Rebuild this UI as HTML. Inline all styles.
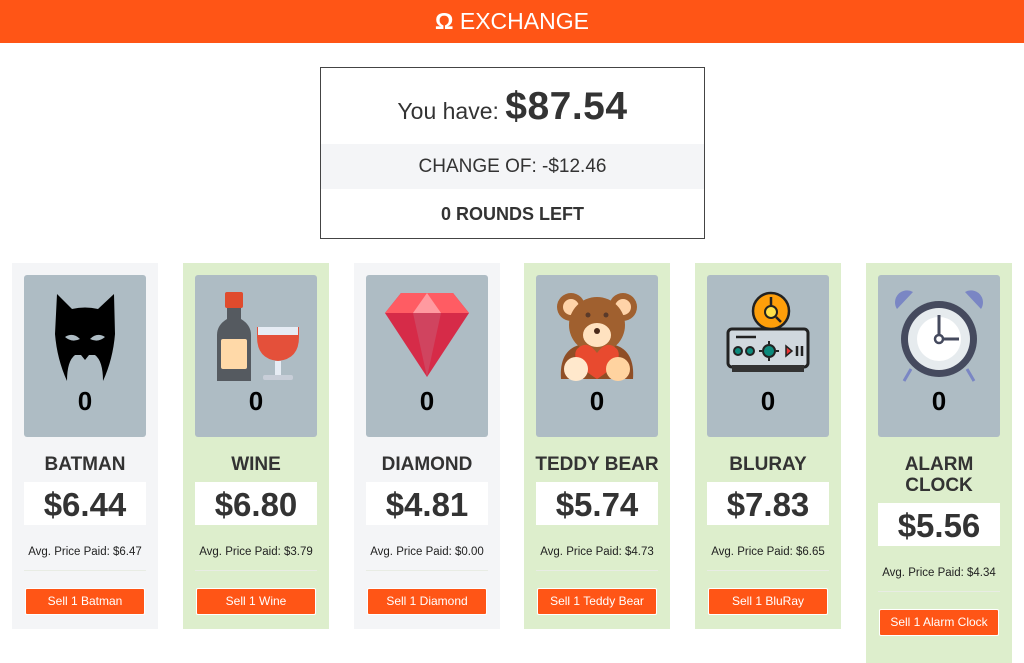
<!DOCTYPE html>
<html><head><meta charset="utf-8"><style>
*{box-sizing:border-box;margin:0;padding:0}
body{width:1024px;height:640px;overflow:hidden;background:#fff;font-family:"Liberation Sans",sans-serif;color:#333;position:relative}
.hdr{position:absolute;left:0;top:0;width:1024px;height:43px;background:#ff5516;color:#fff;font-size:23px;text-align:center;line-height:43px}
.box{position:absolute;left:320px;top:67px;width:385px;height:172px;border:1px solid #444;background:#fff;text-align:center}
.you{height:76px;line-height:78px;font-size:23px}
.you b{font-size:39px;letter-spacing:0.5px}
.chg{height:45px;line-height:46px;background:#f4f5f7;font-size:19px}
.rnd{height:49px;line-height:51px;font-size:18px;font-weight:bold}
.card{position:absolute;top:263px;width:146px;height:366px;text-align:center}
.g{background:#f4f5f7}.gr{background:#ddeecc}
.img{position:absolute;left:12px;top:12px;width:122px;height:162px;background:#aebcc4;border-radius:3px}
.img svg{position:absolute;left:16px;top:14px}
.cnt{position:absolute;left:0;width:122px;top:111px;font-size:26px;font-weight:bold;color:#000}
.nm{position:absolute;left:0;width:146px;top:191px;font-size:19px;font-weight:bold;line-height:21px}
.pr{position:absolute;left:12px;width:122px;top:219px;height:43px;background:#fff;font-size:33px;font-weight:bold;line-height:46px}
.avg{position:absolute;left:0;width:146px;top:283px;font-size:11.5px;color:#222}
.hr{position:absolute;left:12px;width:122px;top:307px;border-top:1px solid #e8ece4}
.btn{position:absolute;left:13px;width:120px;top:325px;height:27px;background:#ff5516;border:1px solid #fff;border-radius:2px;color:#fff;font-size:12px;line-height:25px}
.tall{height:400px}
.tall .pr{top:240px}.tall .avg{top:304px}.tall .hr{top:328px}.tall .btn{top:346px}
</style></head><body>
<div class="hdr"><b>Ω</b> EXCHANGE</div>
<div class="box"><div class="you">You have: <b>$87.54</b></div><div class="chg">CHANGE OF: -$12.46</div><div class="rnd">0 ROUNDS LEFT</div></div>

<div class="card g" style="left:12px"><div class="img"><svg width="90" height="96" viewBox="-5 0 90 96"><path d="M12 5 L27 20 Q40 17 53 20 L69 5 L70 45 Q68 70 58 92 Q58 72 50 66 L44 66 L40 71 L36 66 L30 66 Q22 72 22 92 Q12 70 10 45 Z" fill="#000"/><path d="M20 48 Q28 43 35 50 Q27 54 20 48Z M60 48 Q52 43 45 50 Q53 54 60 48Z" fill="#aebcc4"/></svg><div class="cnt">0</div></div><div class="nm">BATMAN</div><div class="pr">$6.44</div><div class="avg">Avg. Price Paid: $6.47</div><div class="hr"></div><div class="btn">Sell 1 Batman</div></div>

<div class="card gr" style="left:183px"><div class="img"><svg width="90" height="96" viewBox="-6 0 90 96"><rect x="8" y="3" width="18" height="16" rx="2" fill="#e04b2d"/><path d="M10 19 H24 V30 Q34 36 34 46 V92 H0 V46 Q0 36 10 30Z" fill="#555a60"/><rect x="4" y="50" width="26" height="30" rx="2" fill="#ffd9a8"/><path d="M40 38 H82 V48 Q82 70 61 72 Q40 70 40 48Z" fill="#e4503a"/><path d="M41 38 H81 V46 H41Z" fill="#e6ecf4"/><rect x="58" y="72" width="6" height="14" fill="#e6ecf4"/><rect x="46" y="86" width="30" height="5" rx="2" fill="#c8ced8"/></svg><div class="cnt">0</div></div><div class="nm">WINE</div><div class="pr">$6.80</div><div class="avg">Avg. Price Paid: $3.79</div><div class="hr"></div><div class="btn">Sell 1 Wine</div></div>

<div class="card g" style="left:354px"><div class="img"><svg width="90" height="96" viewBox="-5 0 90 96"><path d="M-2 24 L14 4 H66 L82 24 L40 88Z" fill="#d62b48"/><path d="M-2 24 L14 4 H66 L82 24Z" fill="#ff5c63"/><path d="M26 24 L40 4 L54 24Z" fill="#ff9aa0"/><path d="M26 24 H54 L40 88Z" fill="#d0445f"/></svg><div class="cnt">0</div></div><div class="nm">DIAMOND</div><div class="pr">$4.81</div><div class="avg">Avg. Price Paid: $0.00</div><div class="hr"></div><div class="btn">Sell 1 Diamond</div></div>

<div class="card gr" style="left:524px"><div class="img"><svg width="90" height="96" viewBox="-5 0 90 96"><circle cx="14" cy="18" r="14" fill="#a0602f"/><circle cx="66" cy="18" r="14" fill="#a0602f"/><circle cx="14" cy="18" r="8" fill="#ffd3a8"/><circle cx="66" cy="18" r="8" fill="#ffd3a8"/><path d="M4 90 Q2 62 22 56 H58 Q78 62 76 90Z" fill="#8f4e26"/><circle cx="40" cy="36" r="28" fill="#a0602f"/><ellipse cx="40" cy="46" rx="14" ry="12" fill="#ffe2c0"/><circle cx="40" cy="42" r="3" fill="#4a2a1a"/><circle cx="31" cy="26" r="2.5" fill="#5a3a2a"/><circle cx="49" cy="26" r="2.5" fill="#5a3a2a"/><path d="M40 64 Q30 50 20 60 Q12 72 40 90 Q68 72 60 60 Q50 50 40 64Z" fill="#e84a2f"/><circle cx="19" cy="80" r="12" fill="#ffe8cc"/><circle cx="61" cy="80" r="12" fill="#ffd3a0"/></svg><div class="cnt">0</div></div><div class="nm">TEDDY BEAR</div><div class="pr">$5.74</div><div class="avg">Avg. Price Paid: $4.73</div><div class="hr"></div><div class="btn">Sell 1 Teddy Bear</div></div>

<div class="card gr" style="left:695px"><div class="img"><svg width="90" height="96" viewBox="-5 0 90 96"><rect x="0" y="40" width="80" height="38" rx="4" fill="#d0d8de" stroke="#222" stroke-width="3"/><rect x="4" y="76" width="72" height="7" fill="#333"/><circle cx="43" cy="22" r="18" fill="#ff9f0a" stroke="#222" stroke-width="2.5"/><circle cx="43" cy="23" r="6" fill="#ffe04a" stroke="#222" stroke-width="2"/><path d="M43 8 V17 M48 28 L53 33" stroke="#222" stroke-width="2.5"/><circle cx="10" cy="62" r="4" fill="#0c8a7c" stroke="#222" stroke-width="2"/><circle cx="22" cy="62" r="4" fill="#0c8a7c" stroke="#222" stroke-width="2"/><circle cx="41" cy="62" r="6" fill="#0c8a7c" stroke="#222" stroke-width="2"/><path d="M41 52 V55 M41 69 V72 M31 62 H34 M48 62 H51" stroke="#222" stroke-width="2"/><path d="M58 57 L64 62 L58 67Z" fill="#e33" stroke="#222" stroke-width="1.5"/><path d="M69 57 V67 M74 57 V67 M8 48 H28" stroke="#222" stroke-width="2.5"/></svg><div class="cnt">0</div></div><div class="nm">BLURAY</div><div class="pr">$7.83</div><div class="avg">Avg. Price Paid: $6.65</div><div class="hr"></div><div class="btn">Sell 1 BluRay</div></div>

<div class="card gr tall" style="left:866px"><div class="img"><svg width="90" height="96" viewBox="-5 0 90 96"><path d="M-2 20 A12 12 0 0 1 14 3Z M82 20 A12 12 0 0 0 66 3Z" fill="#7a86c4"/><path d="M12 80 L5 92 M68 80 L75 92" stroke="#7a86c4" stroke-width="3"/><circle cx="40" cy="50" r="38" fill="#454a5e"/><circle cx="40" cy="50" r="31" fill="#e6ebee"/><circle cx="40" cy="50" r="22" fill="#fff"/><path d="M40 50 V26 M40 50 H60" stroke="#454a5e" stroke-width="3"/><circle cx="40" cy="50" r="4" fill="#fff" stroke="#454a5e" stroke-width="2.5"/></svg><div class="cnt">0</div></div><div class="nm">ALARM<br>CLOCK</div><div class="pr">$5.56</div><div class="avg">Avg. Price Paid: $4.34</div><div class="hr"></div><div class="btn">Sell 1 Alarm Clock</div></div>
</body></html>
